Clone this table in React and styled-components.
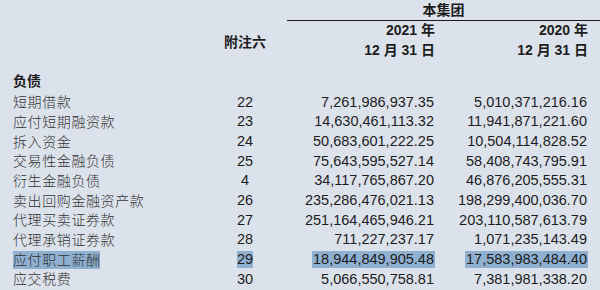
import React from 'react';
import styled, { createGlobalStyle } from 'styled-components';

const rows = [
  { label: '短期借款', note: '22', a: '7,261,986,937.35', b: '5,010,371,216.16' },
  { label: '应付短期融资款', note: '23', a: '14,630,461,113.32', b: '11,941,871,221.60' },
  { label: '拆入资金', note: '24', a: '50,683,601,222.25', b: '10,504,114,828.52' },
  { label: '交易性金融负债', note: '25', a: '75,643,595,527.14', b: '58,408,743,795.91' },
  { label: '衍生金融负债', note: '4', a: '34,117,765,867.20', b: '46,876,205,555.31' },
  { label: '卖出回购金融资产款', note: '26', a: '235,286,476,021.13', b: '198,299,400,036.70' },
  { label: '代理买卖证券款', note: '27', a: '251,164,465,946.21', b: '203,110,587,613.79' },
  { label: '代理承销证券款', note: '28', a: '711,227,237.17', b: '1,071,235,143.49' },
  { label: '应付职工薪酬', note: '29', a: '18,944,849,905.48', b: '17,583,983,484.40', selected: true },
  { label: '应交税费', note: '30', a: '5,066,550,758.81', b: '7,381,981,338.20' },
];

const GlobalStyle = createGlobalStyle`
  html, body {
    margin: 0;
    padding: 0;
    background: #dce2ec;
  }
  body {
    width: 600px;
    height: 290px;
    overflow: hidden;
    font-family: 'Liberation Sans', 'Noto Sans CJK SC', sans-serif;
  }
`;

const Page = styled.div`
  padding: 0 12px 0 13px;
  color: #1c1c1c;
`;

const Head = styled.div`
  display: grid;
  grid-template-columns: 202px 60px 160px 153px;
  grid-template-rows: 21px 19.5px 19.5px;
  font-weight: bold;
  font-size: 14px;
`;

const GroupTitle = styled.div`
  grid-row: 1;
  grid-column: 3 / 5;
  margin: 0 -12px 0 12px;
  border-bottom: 1px solid #1a1a1a;
  line-height: 20px;
  text-align: center;
`;

const NoteHead = styled.div`
  grid-row: 2 / 4;
  grid-column: 2;
  align-self: center;
  text-align: center;
`;

const DateHead = styled.div`
  grid-row: ${(p) => p.$row};
  grid-column: ${(p) => p.$col};
  line-height: 19.5px;
  text-align: right;
  white-space: pre;
`;

const Section = styled.div`
  margin-top: 10.6px;
  margin-bottom: 2px;
  line-height: 19.7px;
  font-size: 14px;
  font-weight: bold;
  font-family: 'Noto Sans CJK SC', sans-serif;
`;

const Row = styled.div`
  display: grid;
  grid-template-columns: 202px 60px 160px 153px;
  height: 19.7px;
  font-size: 14.5px;
`;

const Cell = styled.div`
  display: flex;
  align-items: center;
  justify-content: ${(p) => p.$align || 'flex-end'};
  white-space: nowrap;
`;

const Label = styled.span`
  font-family: 'Noto Sans CJK SC', sans-serif;
  font-size: 14px;
  font-weight: 300;
  color: #333;
  letter-spacing: 0.6px;
  margin-right: -0.6px;
`;

const Mark = styled.span`
  display: inline-block;
  line-height: 17px;
  padding: 0 ${(p) => p.$pad || 0}px;
  background: ${(p) => (p.$on ? '#8fb0d1' : 'transparent')};
`;

export default function App() {
  return (
    <>
      <GlobalStyle />
      <Page>
        <Head>
          <GroupTitle>本集团</GroupTitle>
          <NoteHead>附注六</NoteHead>
          <DateHead $row={2} $col={3}>2021 年</DateHead>
          <DateHead $row={3} $col={3}>12 月 31 日</DateHead>
          <DateHead $row={2} $col={4}>2020 年</DateHead>
          <DateHead $row={3} $col={4}>12 月 31 日</DateHead>
        </Head>
        <Section>负债</Section>
        {rows.map((r) => (
          <Row key={r.label}>
            <Cell $align="flex-start">
              <Mark $on={r.selected}>
                <Label>{r.label}</Label>
              </Mark>
            </Cell>
            <Cell $align="center">
              <Mark $on={r.selected}>{r.note}</Mark>
            </Cell>
            <Cell>
              <Mark $on={r.selected} $pad={1}>{r.a}</Mark>
            </Cell>
            <Cell>
              <Mark $on={r.selected} $pad={1}>{r.b}</Mark>
            </Cell>
          </Row>
        ))}
      </Page>
    </>
  );
}
